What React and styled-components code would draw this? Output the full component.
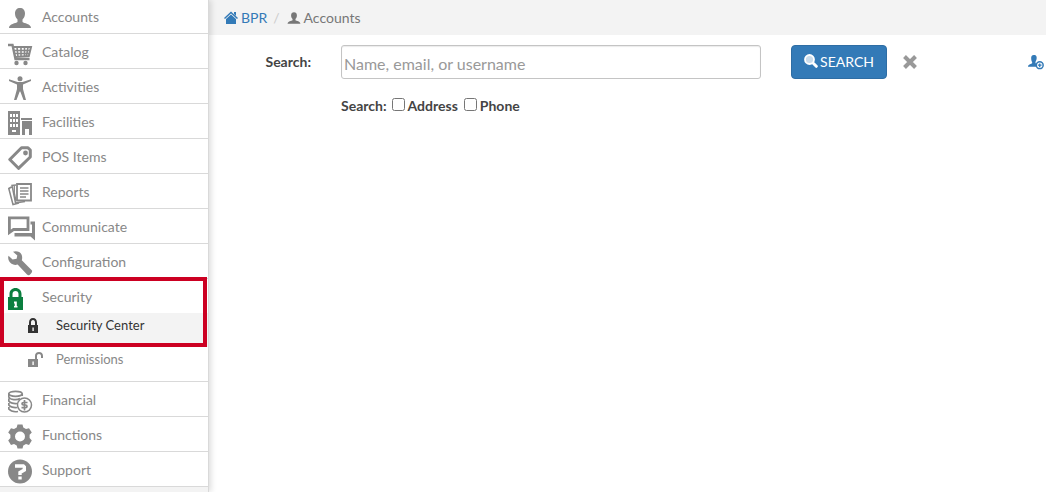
import React from "react";
import styled, { createGlobalStyle } from "styled-components";

const GlobalStyle = createGlobalStyle`
  * {
    box-sizing: border-box;
  }
  body {
    margin: 0;
    background: #ffffff;
    font-family: Lato, "Open Sans", sans-serif;
    font-size: 14px;
    line-height: 20px;
    color: #777777;
  }
`;

const Page = styled.div`
  display: flex;
  min-height: 100vh;
  overflow: hidden;
`;

const Sidebar = styled.nav`
  flex: 0 0 209px;
  background: #f3f3f3;
  border-right: 1px solid #d9d9d9;
  box-shadow: 2px 0 6px rgba(0, 0, 0, 0.14);
  position: relative;
`;

const MenuList = styled.ul`
  list-style: none;
  margin: -1px 0 0;
  padding: 0;
`;

const MenuItem = styled.li`
  position: relative;
  background: #ffffff;
  border-bottom: 1px solid #d9d9d9;
`;

const MenuLink = styled.a`
  display: flex;
  align-items: flex-start;
  gap: 6px;
  height: 34px;
  padding: 7px 8px 0;
  color: #888888;
  text-decoration: none;
`;

const MenuIcon = styled.svg`
  flex: none;
  width: 28px;
  height: 25px;
  color: ${(props) => props.$color || "#888888"};
`;

const MenuLabel = styled.span`
  padding-top: 1px;
`;

const SubList = styled.ul`
  list-style: none;
  margin: 0;
  padding: 0;
`;

const SubLink = styled.a`
  display: flex;
  align-items: flex-start;
  gap: 12px;
  height: 34px;
  padding: 2px 8px 0 28px;
  font-size: 13px;
  text-decoration: none;
  background: ${(props) => (props.$active ? "#f3f3f3" : "#ffffff")};
  color: ${(props) => (props.$active ? "#333333" : "#888888")};
`;

const SubIcon = styled.svg`
  flex: none;
  width: 16px;
  height: 16px;
  margin-top: 3px;
`;

const Highlight = styled.div`
  position: absolute;
  z-index: 1;
  top: -2px;
  left: 0;
  right: 1px;
  height: 70px;
  border: 4px solid #cc0022;
  pointer-events: none;
`;

const Main = styled.main`
  flex: 1;
  min-width: 0;
`;

const Breadcrumb = styled.nav`
  display: flex;
  align-items: center;
  height: 35px;
  padding: 0 15px;
  background: #f3f3f3;
`;

const Crumb = styled.span`
  display: flex;
  align-items: center;
  gap: 3px;
`;

const CrumbLink = styled.a`
  display: flex;
  align-items: center;
  gap: 3px;
  color: #337ab7;
  text-decoration: none;
`;

const Slash = styled.span`
  padding: 0 7px 0 6px;
  color: #cccccc;
`;

const SmallIcon = styled.svg`
  flex: none;
  width: 14px;
  height: 14px;
`;

const AddIcon = styled(SmallIcon)`
  width: 16px;
  height: 16px;
`;

const Form = styled.form`
  padding: 10px 0;
  color: #444444;
`;

const SearchRow = styled.div`
  display: flex;
  align-items: center;
`;

const SearchLabel = styled.label`
  flex: 0 0 102px;
  margin-right: 30px;
  text-align: right;
  font-weight: 700;
`;

const SearchInput = styled.input`
  flex: 0 1 420px;
  min-width: 0;
  height: 34px;
  padding: 2px 2px 0;
  border: 1px solid #c4c4c4;
  border-radius: 3px;
  box-shadow: inset 0 1px 1px rgba(0, 0, 0, 0.08);
  font-family: inherit;
  font-size: 16px;
  color: #444444;
  &::placeholder {
    color: #999999;
    opacity: 1;
  }
`;

const SearchButton = styled.button`
  display: flex;
  align-items: center;
  justify-content: center;
  gap: 2px;
  flex: 0 0 96px;
  height: 34px;
  margin-left: 30px;
  padding: 0 0 2px;
  border: 1px solid #2e6da4;
  border-radius: 4px;
  background: #337ab7;
  color: #ffffff;
  font-family: inherit;
  font-size: 14px;
`;

const IconButton = styled.button`
  display: flex;
  flex: none;
  padding: 0;
  border: 0;
  background: none;
  color: ${(props) => props.$color};
`;

const ClearButton = styled(IconButton)`
  margin-left: 16px;
`;

const AddButton = styled(IconButton)`
  margin-left: auto;
  margin-right: 2px;
`;

const FilterRow = styled.fieldset`
  display: flex;
  align-items: center;
  margin: 17px 0 0 132px;
  padding: 0;
  border: 0;
  font-weight: 700;
`;

const FilterTitle = styled.span`
  margin-right: 5px;
`;

const FilterLabel = styled.label`
  display: flex;
  align-items: center;
  gap: 3px;
  margin-right: 6px;
`;

const Checkbox = styled.input`
  width: 13px;
  height: 13px;
  margin: 0 0 3px;
`;

const icons = {
  user: (
    <path
      fill="currentColor"
      d="M12 2C15 2 17 4 17 7.500C17 10 16 12 14.500 13.500V16C16 17.500 23 17.500 23 22H1C1 17.500 8 17.500 9.500 16V13.500C8 12 7 10 7 7.500C7 4 9 2 12 2Z"
    />
  ),
  cart: (
    <g fill="none" stroke="currentColor">
      <path strokeWidth="2.400" d="M0 4H4.500L7.500 18H21.500" />
      <path strokeWidth="2" d="M5 6H23L20.800 15L7 16" />
      <path d="M5 9.500H22M6 12.500H21M9 6L10 16M13 6V16M16.500 6V16M20 6L18.500 15" strokeWidth="1.600" />
      <circle cx="8.500" cy="22" r="2.200" fill="currentColor" stroke="none" />
      <circle cx="17.500" cy="22" r="2.200" fill="currentColor" stroke="none" />
    </g>
  ),
  person: (
    <g fill="currentColor">
      <circle cx="12" cy="2.700" r="2.500" />
      <path d="M1 3.300L9.500 6H14.500L23 3.300V5L15 8.500V13L18 24H15.500L12.300 15.500H11.700L8.500 24H6L9 13V8.500L1 5Z" />
    </g>
  ),
  building: (
    <g fill="currentColor">
      <path
        fillRule="evenodd"
        d="M0 0H12V24H0ZM2 3V6H4V3ZM5 3V6H7V3ZM8 3V6H10V3ZM2 8V11H4V8ZM5 8V11H7V8ZM8 8V11H10V8ZM2 13V16H4V13ZM5 13V16H7V13ZM8 13V16H10V13ZM4 19V21H8V19Z"
      />
      <path d="M13 7H24V9H13ZM14 10H24V24H21V18H17V24H14Z" />
    </g>
  ),
  tag: (
    <g>
      <path
        fill="none"
        stroke="currentColor"
        strokeWidth="3"
        strokeLinejoin="round"
        d="M13.500 1.800H20L22.300 4V11L10.500 22.300L1.800 13.500Z"
      />
      <circle cx="17.500" cy="7" r="2.400" fill="currentColor" />
    </g>
  ),
  report: (
    <g fill="none" stroke="currentColor">
      <path strokeWidth="1.800" d="M9 3H23V19.500H9Z" />
      <path strokeWidth="1.600" d="M12 7H20.500M12 10H20.500M12 13H20.500M12 16H18" />
      <path strokeWidth="1.500" d="M8 4L4 4.500L7.500 22L17 20.500M3.500 6L.800 7.500L5 23.500L11 22" />
      <path strokeWidth="1.300" d="M6.300 5V12L8 20" />
    </g>
  ),
  chat: (
    <g>
      <path
        fill="none"
        stroke="currentColor"
        strokeWidth="2.800"
        d="M1.400 1.900H20V13.500H5.500L1.400 16.500Z"
      />
      <path fill="currentColor" d="M22.500 5.500H27V24.500L22.500 20.500H6.500V17H24V8.500H22.500Z" />
    </g>
  ),
  wrench: (
    <path
      fill="currentColor"
      d="M5 .800C8 -.500 12 .500 13.500 3.500C14.400 5.500 14.300 7.500 13.800 9.200L24 19.500C24.500 20.500 23.500 22.500 21.500 24C20.500 24.500 19.700 24.200 19 23.500L9.600 13.500C6 14.700 2.500 13 1 10C0 8 0 6.300 .500 4.800L4.600 8.600L8.600 7.700L9.300 4.500Z"
    />
  ),
  lock: (
    <path
      fill="currentColor"
      fillRule="evenodd"
      d="M1.500 11V8C1.500 4.500 4 2 7.500 2S13.500 4.500 13.500 8V11H15V24H0V11ZM4.500 11H10.500V8C10.500 6 9.300 5 7.500 5S4.500 6 4.500 8ZM6 15.500V17.500H6.700V20H6V21.500H9.500V20H8.800V15.500Z"
    />
  ),
  coins: (
    <g fill="none" stroke="currentColor" strokeWidth="1.700">
      <ellipse cx="7.500" cy="4.800" rx="6.700" ry="2.500" />
      <path d="M.800 5V8C2 11 9 11.500 12 9.500M14.200 5V7M.800 9.500V12C2 14 6 15 9 14.500M.800 14V16C2 18 6 19 9 18.500M.800 18V20C3 22.500 7 23 10 22.500" />
      <circle cx="16.500" cy="16" r="7" fill="#ffffff" strokeWidth="1.500" />
      <path d="M19.500 13.500H15.500C13.500 13.500 13.500 16 15.500 16H17.500C19.500 16 19.500 18.700 17.500 18.700H13.500M16.500 11V21.500" />
    </g>
  ),
  gear: (
    <path
      fill="currentColor"
      fillRule="evenodd"
      d="M9.500 .500H14.500L15.300 3.500L18 5L21 4.200L23.800 8.500L21.600 10.700V14L23.800 16.500L21 21L18 20L15.300 21.500L14.500 24.500H9.500L8.700 21.500L6 20L3 21L.200 16.500L2.400 14V10.700L.200 8.500L3 4.200L6 5L8.700 3.500ZM12 7.500A5 5 0 1 0 12 17.500A5 5 0 1 0 12 7.500Z"
    />
  ),
  help: (
    <g>
      <circle cx="12" cy="12.500" r="12" fill="currentColor" />
      <path
        fill="none"
        stroke="#ffffff"
        strokeWidth="3.400"
        d="M7 7H15.300L16.300 8V11L12 13.500V16"
      />
      <path fill="#ffffff" d="M10.300 17.500H13.700V20.500H10.300Z" />
    </g>
  ),
};

const menu = [
  { label: "Accounts", icon: "user" },
  { label: "Catalog", icon: "cart" },
  { label: "Activities", icon: "person" },
  { label: "Facilities", icon: "building" },
  { label: "POS Items", icon: "tag" },
  { label: "Reports", icon: "report" },
  { label: "Communicate", icon: "chat" },
  { label: "Configuration", icon: "wrench" },
  { label: "Security", icon: "lock", color: "#0b7f3f", open: true },
  { label: "Financial", icon: "coins" },
  { label: "Functions", icon: "gear" },
  { label: "Support", icon: "help" },
];

function SecurityMenu() {
  return (
    <SubList>
      <li>
        <SubLink href="#security-center" $active>
          <SubIcon viewBox="0 0 16 16" aria-hidden="true">
            <path
              fill="currentColor"
              fillRule="evenodd"
              d="M1 7V4.500C1 2 2.500 0 5 0S9 2 9 4.500V7H10V15H0V7ZM3 7H7V4.500C7 3 6.300 2 5 2S3 3 3 4.500ZM4.400 9.500V13H5.800V9.500Z"
            />
          </SubIcon>
          Security Center
        </SubLink>
      </li>
      <li>
        <SubLink href="#permissions">
          <SubIcon viewBox="0 0 16 16" aria-hidden="true">
            <path
              fill="currentColor"
              fillRule="evenodd"
              d="M7 7V4C7 1.500 8.500 0 11 0S15 1.500 15 4V6H13V4C13 2.700 12.300 2 11 2S9 2.700 9 4V7H10V15H0V7ZM4.400 9.500V13H5.800V9.500Z"
            />
          </SubIcon>
          Permissions
        </SubLink>
      </li>
    </SubList>
  );
}

export default function App() {
  return (
    <Page>
      <GlobalStyle />
      <Sidebar>
        <MenuList>
          {menu.map((item) => (
            <MenuItem key={item.label}>
              <MenuLink href={"#" + item.icon}>
                <MenuIcon viewBox="0 0 28 25" $color={item.color} aria-hidden="true">
                  {icons[item.icon]}
                </MenuIcon>
                <MenuLabel>{item.label}</MenuLabel>
              </MenuLink>
              {item.open && <SecurityMenu />}
              {item.open && <Highlight />}
            </MenuItem>
          ))}
        </MenuList>
      </Sidebar>
      <Main>
        <Breadcrumb>
          <CrumbLink href="#home">
            <SmallIcon viewBox="0 0 14 14" aria-hidden="true">
              <path fill="none" stroke="currentColor" strokeWidth="1.500" d="M.500 7.500L7 1.500L13.500 7.500" />
              <path fill="currentColor" d="M7 3.500L12 8V13H2V8ZM10 1H12V5L10 3Z" />
            </SmallIcon>
            BPR
          </CrumbLink>
          <Slash>/</Slash>
          <Crumb>
            <SmallIcon viewBox="0 1 24 22" aria-hidden="true">
              {icons.user}
            </SmallIcon>
            Accounts
          </Crumb>
        </Breadcrumb>
        <Form onSubmit={(e) => e.preventDefault()}>
          <SearchRow>
            <SearchLabel htmlFor="search">Search:</SearchLabel>
            <SearchInput id="search" type="text" placeholder="Name, email, or username" />
            <SearchButton type="submit">
              <SmallIcon viewBox="0 0 14 14" aria-hidden="true">
                <path stroke="#ffffff" strokeWidth="3" strokeLinecap="round" d="M9.500 9.500L12.300 12.300" />
                <circle cx="5.500" cy="5.500" r="4.500" fill="#c9dcec" stroke="#ffffff" strokeWidth="1.800" />
              </SmallIcon>
              SEARCH
            </SearchButton>
            <ClearButton type="button" aria-label="Clear" $color="#999999">
              <SmallIcon viewBox="0 0 14 14" aria-hidden="true">
                <path stroke="currentColor" strokeWidth="4" d="M1.500 1.500L12.500 12.500M12.500 1.500L1.500 12.500" />
              </SmallIcon>
            </ClearButton>
            <AddButton type="button" aria-label="Add account" $color="#337ab7">
              <AddIcon viewBox="0 0 15 15" aria-hidden="true">
                <path
                  fill="currentColor"
                  d="M5.500 1C8 1 8.500 3 8 5C7.700 6.500 7 7 7 8C7 9 8 9 8 10V12H0C0 9.500 3.500 9.500 4 8.500C4 7.500 3 6.500 3 4.500C2.800 2.500 3.500 1 5.500 1Z"
                />
                <circle cx="11" cy="10.500" r="3.200" fill="#ffffff" stroke="currentColor" strokeWidth="1.400" />
                <path stroke="currentColor" strokeWidth="1.200" d="M9.300 10.500H12.700M11 8.800V12.200" />
              </AddIcon>
            </AddButton>
          </SearchRow>
          <FilterRow>
            <FilterTitle>Search:</FilterTitle>
            <FilterLabel>
              <Checkbox type="checkbox" />
              Address
            </FilterLabel>
            <FilterLabel>
              <Checkbox type="checkbox" />
              Phone
            </FilterLabel>
          </FilterRow>
        </Form>
      </Main>
    </Page>
  );
}
